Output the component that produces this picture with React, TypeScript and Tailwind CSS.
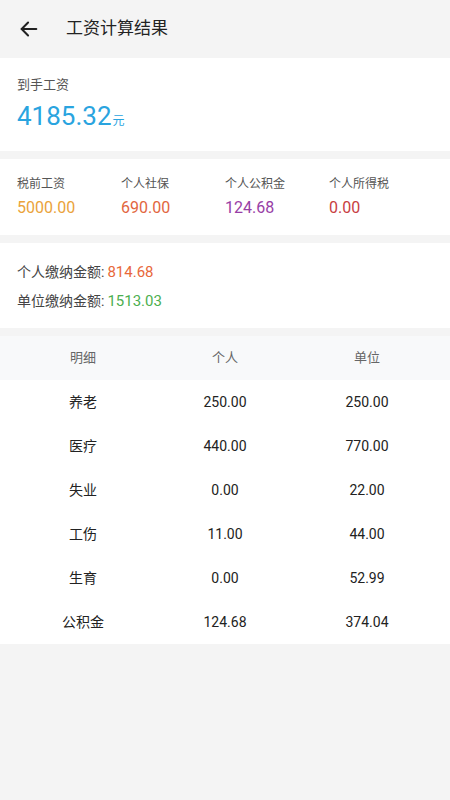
import React from "react";

const rows = [
  ["养老", "250.00", "250.00"],
  ["医疗", "440.00", "770.00"],
  ["失业", "0.00", "22.00"],
  ["工伤", "11.00", "44.00"],
  ["生育", "0.00", "52.99"],
  ["公积金", "124.68", "374.04"],
];

export default function App() {
  return (
    <div
      className="w-[450px] h-[800px] bg-[#f4f4f4] flex flex-col"
      style={{ fontFamily: '"Roboto", "Noto Sans CJK SC", sans-serif' }}
    >
      <div className="h-[58px] flex items-center px-[18px] shrink-0">
        <svg width="22" height="22" viewBox="0 0 24 24" fill="none" stroke="#222" strokeWidth="2.2" strokeLinecap="round" strokeLinejoin="round">
          <path d="M20 12H4" />
          <path d="M11 5l-7 7 7 7" />
        </svg>
        <span className="ml-[26px] text-[17px] text-[#222]">工资计算结果</span>
      </div>

      <div className="bg-white h-[93px] px-[17px] pt-[18px] flex flex-col">
        <span className="text-[13px] text-[#555] leading-[18px]">到手工资</span>
        <div className="flex items-baseline mt-[5px]">
          <span className="text-[26px] text-[#2aa4df] leading-[34px]">4185.32</span>
          <span className="text-[12px] text-[#2aa4df] ml-[1px]">元</span>
        </div>
      </div>

      <div className="bg-white h-[76px] mt-[8px] px-[17px] pt-[17px] grid grid-cols-4">
        {[
          ["税前工资", "5000.00", "text-[#eaa33a]"],
          ["个人社保", "690.00", "text-[#e2663e]"],
          ["个人公积金", "124.68", "text-[#983ea6]"],
          ["个人所得税", "0.00", "text-[#c8403f]"],
        ].map(([l, v, c]) => (
          <div key={l} className="flex flex-col">
            <span className="text-[12px] text-[#555] leading-[16px]">{l}</span>
            <span className={`text-[16px] leading-[22px] mt-[5px] ${c}`}>{v}</span>
          </div>
        ))}
      </div>

      <div className="bg-white h-[85px] mt-[8px] px-[17px] pt-[19px] flex flex-col gap-[9px]">
        <div className="text-[14px] leading-[20px] text-[#444] flex items-baseline">
          <span>个人缴纳金额</span>
          <span className="mr-[3px]">:</span>
          <span className="text-[15px] text-[#e8683a]">814.68</span>
        </div>
        <div className="text-[14px] leading-[20px] text-[#444] flex items-baseline">
          <span>单位缴纳金额</span>
          <span className="mr-[3px]">:</span>
          <span className="text-[15px] text-[#4caf50]">1513.03</span>
        </div>
      </div>

      <div className="mt-[8px] bg-[#f8f9fa] h-[44px] px-[12px] grid grid-cols-3 items-center text-[13px] text-[#666]">
        <span className="text-center">明细</span>
        <span className="text-center">个人</span>
        <span className="text-center">单位</span>
      </div>
      <div className="bg-white flex flex-col">
        {rows.map((r) => (
          <div key={r[0]} className="h-[44px] px-[12px] grid grid-cols-3 items-center text-[14px] text-[#222]">
            <span className="text-center">{r[0]}</span>
            <span className="text-center">{r[1]}</span>
            <span className="text-center">{r[2]}</span>
          </div>
        ))}
      </div>
    </div>
  );
}
